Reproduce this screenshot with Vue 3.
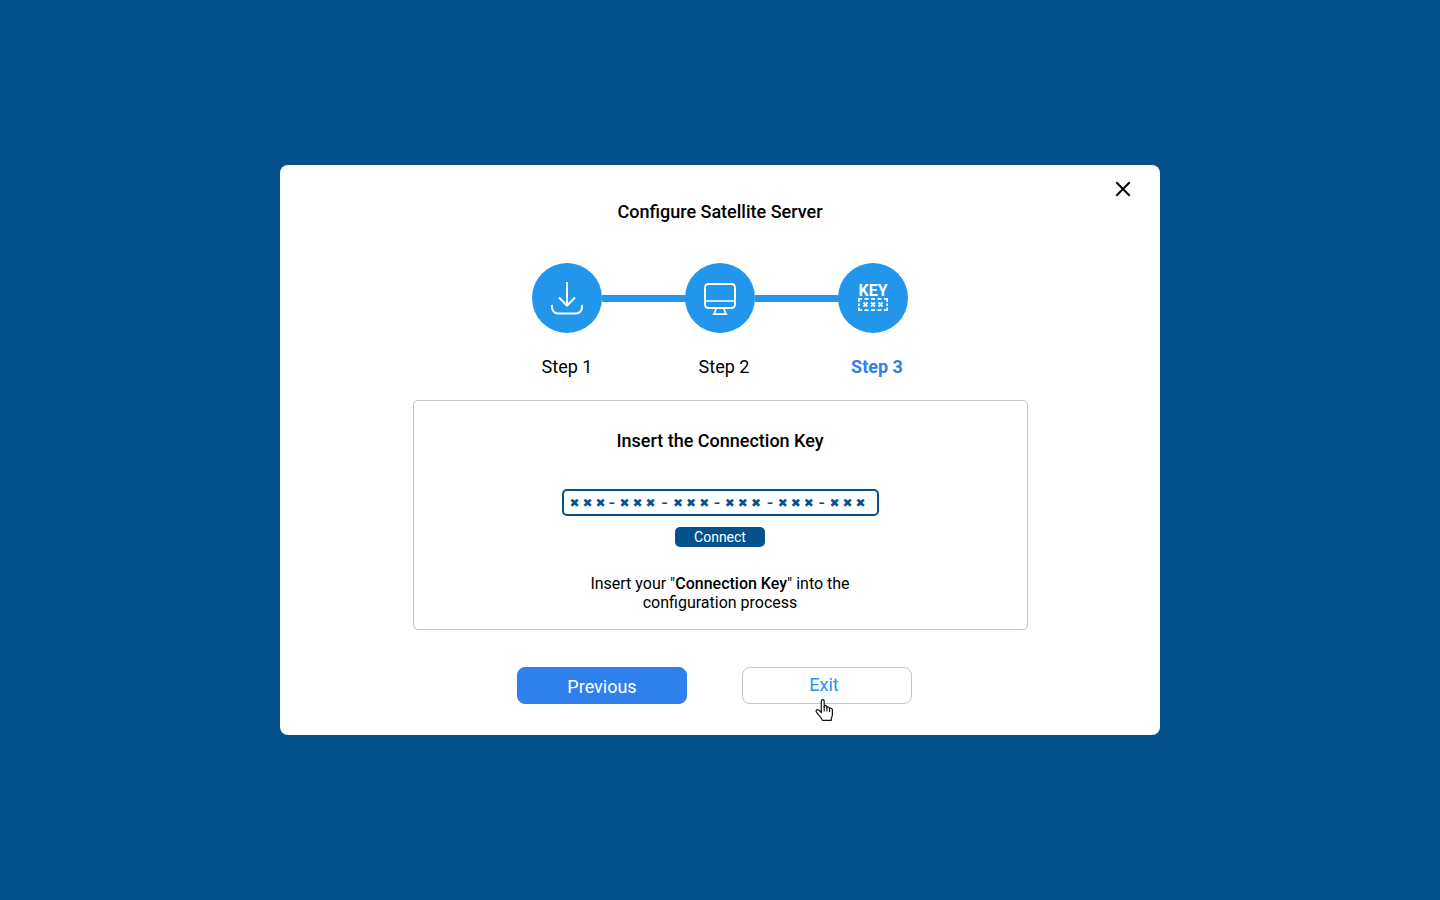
<script setup>
import { ref } from 'vue'

const gap = '\u2005'
const thin = '\u2009'
const group = ['✖', '✖', '✖'].join(gap)

const connectionKey = ref(
  [
    group, gap, '–', thin, thin,
    group, gap, gap, '–', gap, thin,
    group, thin, thin, '–', thin, thin,
    group, gap, gap, '–', thin, thin,
    group, thin, thin, '–', thin, thin,
    group
  ].join('')
)
</script>

<template>
  <main class="page">
    <section class="dialog" role="dialog" aria-labelledby="dialog-title">
      <button class="close" type="button" aria-label="Close">
        <svg width="16" height="16" viewBox="0 0 16 16" fill="none" stroke="#000" stroke-width="2">
          <path d="M1.3 1.3 14.7 14.7M14.7 1.3 1.3 14.7" />
        </svg>
      </button>

      <h1 id="dialog-title" class="title">Configure Satellite Server</h1>

      <ol class="steps">
        <li class="step">
          <span class="disc">
            <svg width="34" height="34" viewBox="0 0 34 34" fill="none" stroke="#fff" stroke-width="2">
              <path d="M17 1v23M9 16.500l8 8 8-8M2 24v2.500a6 6 0 0 0 6 6h18a6 6 0 0 0 6-6V24" />
            </svg>
          </span>
          <span class="label">Step 1</span>
        </li>
        <li class="step">
          <span class="disc">
            <svg width="34" height="34" viewBox="0 0 34 34" fill="none" stroke="#fff" stroke-width="2">
              <rect x="2" y="3" width="30" height="24" rx="3.500" />
              <path stroke-width="1.700" d="M2 20h30M13 27.500l-1.800 6M21 27.500l1.800 6M9.800 33.100h14.400" />
            </svg>
          </span>
          <span class="label">Step 2</span>
        </li>
        <li class="step current" aria-current="step">
          <span class="disc key">
            <span class="key-word">KEY</span>
            <svg width="30" height="13" viewBox="0 0 30 13" fill="none" stroke="#fff">
              <path
                stroke-width="1.800"
                d="M.9 4V.9h3.100M6.500.9h4M13 .9h4M19.500.9h4M26 .9h3.100V4M29.100 5.500v2.500M29.100 9.500v2.600H26M23.500 12.100h-4M17 12.100h-4M10.500 12.100h-4M4 12.100H.9V9.500M.9 8V5.500"
              />
              <path
                stroke-width="1.900"
                d="M5.500 4.500l4 4M9.500 4.500l-4 4M13 4.500l4 4M17 4.500l-4 4M20.500 4.500l4 4M24.500 4.500l-4 4"
              />
            </svg>
          </span>
          <span class="label">Step 3</span>
        </li>
      </ol>

      <form class="panel" @submit.prevent>
        <label class="panel-title" for="connection-key">Insert the Connection Key</label>
        <input id="connection-key" v-model="connectionKey" class="key-input" type="text" autocomplete="off" />
        <button class="connect" type="submit">Connect</button>
        <p class="hint">Insert your "<strong>Connection Key</strong>" into the configuration process</p>
      </form>

      <div class="actions">
        <button class="action previous" type="button">Previous</button>
        <button class="action exit" type="button">
          Exit
          <svg class="pointer" width="20" height="24" viewBox="0 0 20 24" aria-hidden="true">
            <path
              d="M7.300 14.500V3.200C7.300 1 10.200 1 10.200 3.200V9.500 8.700C10.500 7.300 12.700 7.400 12.800 8.900V10C13.200 8.500 15.400 8.700 15.500 10.200V11C16.200 9.600 18.400 10.200 18.400 11.800V16.500C18.400 18.300 17.300 19.300 17.200 22.400H8.400C7.900 20 4.900 17.500 2.800 14.700 1 12.300 2.900 10.700 5 12.200Z"
              fill="#fff"
              stroke="#111"
              stroke-width="1.200"
              stroke-linejoin="round"
            />
            <path d="M10.200 8.500v5M12.900 9.500v4M15.600 10.500v3.500" fill="none" stroke="#111" stroke-width="1.100" />
          </svg>
        </button>
      </div>
    </section>
  </main>
</template>

<style>
body {
  margin: 0;
}
</style>

<style scoped>
.page {
  min-height: 100vh;
  box-sizing: border-box;
  padding: 24px;
  display: flex;
  align-items: center;
  justify-content: center;
  background: #04518c;
  color: #000;
  font-family: Roboto, "DejaVu Sans", sans-serif;
}

button {
  padding: 0;
  font-family: inherit;
  cursor: pointer;
}

.dialog {
  position: relative;
  box-sizing: border-box;
  width: 100%;
  max-width: 880px;
  padding: 36px 24px 31px;
  display: flex;
  flex-direction: column;
  align-items: center;
  border-radius: 8px;
  background: #fff;
}

.close {
  position: absolute;
  top: 16px;
  right: 29px;
  display: flex;
  border: 0;
  background: none;
}

.title,
.panel-title {
  margin: 0;
  font-size: 18px;
  line-height: 22px;
  font-weight: 500;
}

.steps {
  margin: 40px 0 0;
  padding: 0;
  display: flex;
  gap: 83px;
  list-style: none;
}

.step {
  position: relative;
  width: 70px;
  display: flex;
  flex-direction: column;
  align-items: center;
  gap: 23px;
}

.step + .step::before {
  content: "";
  position: absolute;
  top: 32px;
  right: 100%;
  width: 84px;
  height: 7px;
  margin-right: -1px;
  background: #2196eb;
}

.disc {
  width: 70px;
  height: 70px;
  display: flex;
  flex-direction: column;
  align-items: center;
  justify-content: center;
  border-radius: 50%;
  background: #2196eb;
}

.key {
  box-sizing: border-box;
  padding-bottom: 2px;
}

.key-word {
  color: #fff;
  font-size: 16px;
  line-height: 15px;
  font-weight: 700;
}

.label {
  font-size: 18px;
  line-height: 22px;
  white-space: nowrap;
}

.step + .step .label {
  padding-left: 8px;
}

.current .label {
  color: #2f80ed;
  font-weight: 700;
}

.panel {
  box-sizing: border-box;
  width: 100%;
  max-width: 615px;
  margin-top: 22px;
  padding: 29px 16px 17px;
  display: flex;
  flex-direction: column;
  align-items: center;
  border: 1px solid #c4c4c4;
  border-radius: 5px;
}

.key-input {
  box-sizing: border-box;
  width: 100%;
  max-width: 317px;
  height: 27px;
  margin-top: 37px;
  padding: 0 6px;
  border: 2px solid #04518c;
  border-radius: 5px;
  outline: 0;
  background: #fff;
  color: #04518c;
  font-family: "DejaVu Sans", sans-serif;
  font-size: 12px;
  font-weight: 700;
}

.connect {
  width: 90px;
  height: 20px;
  margin-top: 11px;
  border: 0;
  border-radius: 5px;
  background: #04518c;
  color: #fff;
  font-size: 14px;
  line-height: 20px;
}

.hint {
  max-width: 280px;
  margin: 27px 0 0;
  font-size: 16px;
  line-height: 19px;
  text-align: center;
}

.hint strong {
  font-weight: 500;
}

.actions {
  box-sizing: border-box;
  width: 100%;
  max-width: 406px;
  margin-top: 37px;
  padding-right: 11px;
  display: flex;
  justify-content: space-between;
}

.action {
  position: relative;
  box-sizing: border-box;
  width: 170px;
  height: 37px;
  border: 1px solid #c4c4c4;
  border-radius: 8px;
  font-size: 18px;
  line-height: 22px;
}

.previous {
  padding-top: 2px;
  border-color: #2f80ed;
  background: #2f80ed;
  color: #fff;
}

.exit {
  padding: 0 6px 1px 0;
  background: #fff;
  color: #2196eb;
}

.pointer {
  position: absolute;
  top: 30px;
  left: 71px;
}
</style>
